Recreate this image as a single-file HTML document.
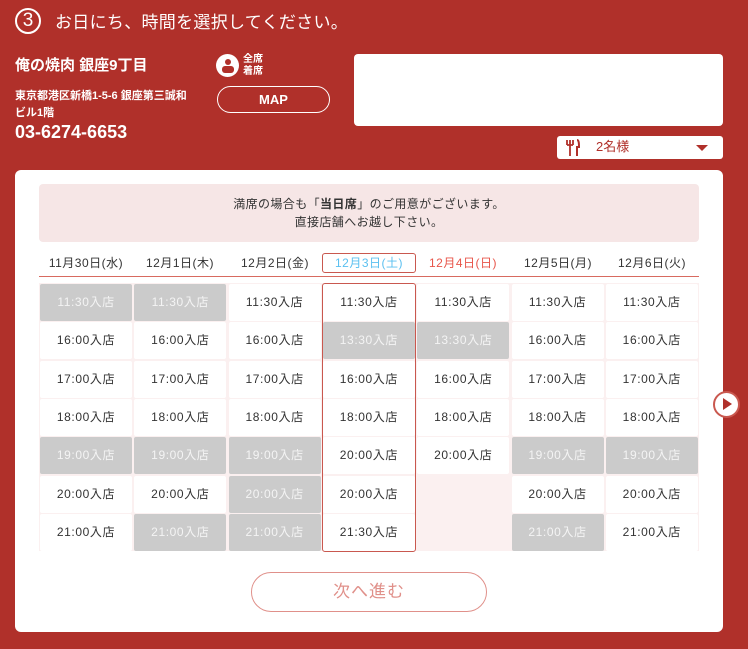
<!DOCTYPE html><html><head><meta charset="utf-8"><style>
*{margin:0;padding:0;box-sizing:border-box}
body{width:748px;height:649px;background:#b0302a;font-family:"Liberation Sans","Noto Sans CJK JP",sans-serif;position:relative;overflow:hidden;color:#fff}
.a{position:absolute}
.cell{position:absolute;width:92px;height:37px;background:#fff;color:#333;font-size:12px;letter-spacing:0.6px;text-align:center;line-height:37px;border-radius:2px}
.g{background:#cbcbcb;color:#f4f4f4}
.hd{position:absolute;top:254px;width:94px;text-align:center;font-size:12px;letter-spacing:0.5px;color:#333;line-height:18px}
</style></head><body>
<div class="a" style="left:15px;top:8px;width:26px;height:26px;border:2px solid #fff;border-radius:50%;text-align:center;line-height:22px;font-size:19px">3</div>
<div class="a" style="left:55px;top:12px;font-size:17px;line-height:22px;letter-spacing:0.3px">お日にち、時間を選択してください。</div>
<div class="a" style="left:15px;top:54px;font-size:15px;font-weight:bold">俺の焼肉 銀座9丁目</div>
<div class="a" style="left:15px;top:88px;font-size:11px;font-weight:bold;line-height:17px">東京都港区新橋1-5-6 銀座第三誠和<br>ビル1階</div>
<div class="a" style="left:15px;top:122px;font-size:18px;font-weight:bold">03-6274-6653</div>
<div class="a" style="left:216px;top:54px;width:23px;height:23px;border-radius:50%;background:#fff"></div>
<div class="a" style="left:225px;top:59px;width:6px;height:6px;border-radius:50%;background:#b0302a"></div>
<div class="a" style="left:222px;top:66px;width:12px;height:7px;border-radius:3px;background:#b0302a"></div>
<div class="a" style="left:243px;top:54px;font-size:10px;font-weight:bold;line-height:12px">全席<br>着席</div>
<div class="a" style="left:217px;top:86px;width:113px;height:27px;border:1px solid #fff;border-radius:14px;text-align:center;line-height:25px;font-size:13px;font-weight:bold">MAP</div>
<div class="a" style="left:354px;top:54px;width:369px;height:72px;background:#fff;border-radius:4px"></div>
<div class="a" style="left:557px;top:136px;width:166px;height:23px;background:#fff;border-radius:3px"></div>
<svg class="a" style="left:565px;top:139px" width="16" height="18" viewBox="0 0 16 18"><path d="M2 1v5M5 1v5M8 1v5M2 6h6M5 6v11" stroke="#b0302a" stroke-width="1.8" fill="none"/><path d="M12 1c2 0 2 4 2 7h-2v9" stroke="#b0302a" stroke-width="2" fill="none"/></svg>
<div class="a" style="left:596px;top:138px;color:#b0302a;font-size:13px;line-height:18px">2名様</div>
<div class="a" style="left:696px;top:145px;width:0;height:0;border-left:6px solid transparent;border-right:6px solid transparent;border-top:6px solid #b0302a"></div>
<div class="a" style="left:15px;top:170px;width:708px;height:462px;background:#fff;border-radius:6px"></div>
<div class="a" style="left:39px;top:184px;width:660px;height:58px;background:#f6e6e6;border-radius:4px;color:#333;font-size:12px;letter-spacing:0.4px;text-align:center;line-height:18px;padding-top:11px">満席の場合も「<b>当日席</b>」のご用意がございます。<br>直接店舗へお越し下さい。</div>
<div class="hd" style="left:39px">11月30日(水)</div>
<div class="hd" style="left:133px">12月1日(木)</div>
<div class="hd" style="left:228px">12月2日(金)</div>
<div class="hd" style="left:322px;width:94px;color:#5bc0f0;border:1px solid #c9584f;border-radius:3px;top:253px">12月3日(土)</div>
<div class="hd" style="left:416px;color:#e8554a">12月4日(日)</div>
<div class="hd" style="left:511px">12月5日(月)</div>
<div class="hd" style="left:605px">12月6日(火)</div>
<div class="a" style="left:39px;top:276px;width:660px;height:1px;background:#d86a60"></div>
<div class="a" style="left:39px;top:283px;width:660px;height:268px;background:#fbf0f0"></div>
<div id="grid"></div>
<script>
var d=[["g11:30","16:00","17:00","18:00","g19:00","20:00","21:00"],
["g11:30","16:00","17:00","18:00","g19:00","20:00","g21:00"],
["11:30","16:00","17:00","18:00","g19:00","g20:00","g21:00"],
["11:30","g13:30","16:00","18:00","20:00","20:00","21:30"],
["11:30","g13:30","16:00","18:00","20:00","",""],
["11:30","16:00","17:00","18:00","g19:00","20:00","g21:00"],
["11:30","16:00","17:00","18:00","g19:00","20:00","21:00"]];
var h="";for(var c=0;c<7;c++)for(var r=0;r<7;r++){var s=d[c][r];if(!s)continue;var g=s[0]=="g";if(g)s=s.slice(1);
h+='<div class="cell'+(g?' g':'')+'" style="left:'+(40+c*94.3).toFixed(1)+'px;top:'+(284+r*38.3).toFixed(1)+'px">'+s+'入店</div>';}
document.getElementById("grid").innerHTML=h;
</script>
<div class="a" style="left:322px;top:283px;width:94px;height:269px;border:1px solid #c9584f;border-radius:3px"></div>
<div class="a" style="left:251px;top:572px;width:236px;height:40px;border:1px solid #e0908a;border-radius:20px;text-align:center;line-height:38px;font-size:17px;letter-spacing:1px;color:#e0908a">次へ進む</div>
<div class="a" style="left:713px;top:391px;width:27px;height:27px;border-radius:50%;background:#fff;border:2px solid #c9584f"></div>
<div class="a" style="left:723px;top:398px;width:0;height:0;border-top:6px solid transparent;border-bottom:6px solid transparent;border-left:9px solid #b0302a"></div>
</body></html>
